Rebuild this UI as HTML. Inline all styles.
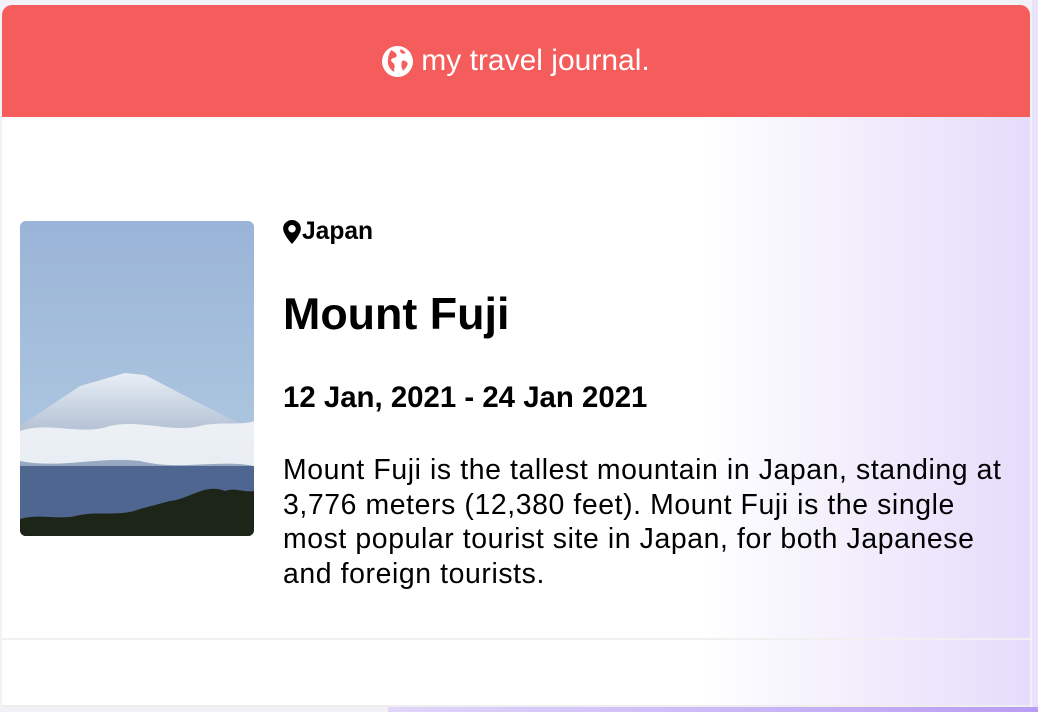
<!DOCTYPE html>
<html><head><style>
html,body{margin:0;padding:0;width:1038px;height:712px;overflow:hidden;font-family:"Liberation Sans",Arial,sans-serif;background:#f3f1f8}
.page{position:absolute;left:2px;top:5px;width:1028px;height:700px;background:linear-gradient(90deg,#fff 0,#fff 68%,#f3effc 82%,#e6dcfb 100%);border-top-left-radius:10px;border-top-right-radius:10px;overflow:hidden}
.rstrip{position:absolute;left:1032px;top:0;width:6px;height:712px;background:#e9e2fb}
.hdr{height:112px;background:#f55c5c;color:#fff;display:flex;align-items:center;justify-content:center;font-size:30px}
.hdr svg{margin-right:8px}
.img{position:absolute;left:18px;top:216px;width:234px;height:315px;border-radius:6px;overflow:hidden}
.txt{position:absolute;left:281px;top:212px;width:735px}
.loc{font-weight:bold;font-size:24.6px;display:flex;align-items:center;height:30px}
.loc svg{margin-right:1px}
h1{margin:43px 0 0;font-size:44.8px;line-height:48px}
.date{font-weight:bold;font-size:29.4px;margin-top:44px;line-height:32px}
p{font-size:28.4px;letter-spacing:0.6px;line-height:34.5px;margin:39px 0 0}
.l1{position:absolute;left:0;top:633px;width:1028px;height:2px;background:#f0f0f0}
.l2{position:absolute;left:2px;top:705px;width:1028px;height:2px;background:#eee}
.bot{position:absolute;left:388px;top:707px;width:650px;height:5px;background:linear-gradient(90deg,#e0d6fa,#b99cf4)}
</style></head><body>
<div class="rstrip"></div>
<div class="page">
<div class="hdr"><svg width="31" height="31" viewBox="0 0 30 30"><circle cx="15" cy="15" r="15" fill="#fff"/><path d="M9 4c3 2 6 3 5 6-1 2-4 1-5 3s2 3 3 5-1 4 0 7c-3-1-5-4-6-7-1-4 0-10 3-14z M18 3c2 1 4 2 5 4-2 0-3 1-4 0s-2-2-1-4z M20 14c2 0 4 1 5 3-1 3-3 6-5 7 0-3-2-4-1-6 0-2 0-3 1-4z" fill="#f55c5c"/></svg>my travel journal.</div>
<div class="l1"></div>
<div class="img"><svg width="234" height="315" viewBox="0 0 234 315">
<defs><linearGradient id="sky" x1="0" y1="0" x2="0" y2="1"><stop offset="0" stop-color="#9ab4d8"/><stop offset="1" stop-color="#b5cde2"/></linearGradient>
<linearGradient id="m" x1="0" y1="0" x2="0" y2="1"><stop offset="0" stop-color="#e8eef5"/><stop offset=".5" stop-color="#9fb0c8"/><stop offset="1" stop-color="#5a6f92"/></linearGradient></defs>
<rect width="234" height="315" fill="url(#sky)"/>
<path d="M0 205 L60 165 L105 152 L125 154 L175 180 L234 210 L234 315 L0 315Z" fill="url(#m)"/>
<path d="M0 210 C30 200 60 215 90 205 C120 198 150 212 180 205 C200 200 220 205 234 200 L234 245 C200 238 160 250 120 240 C80 235 40 248 0 240Z" fill="#f2f5f8" opacity=".9"/>
<rect y="245" width="234" height="70" fill="#4f6690"/>
<path d="M0 315 L0 298 C20 292 40 300 60 294 C80 290 100 296 120 288 L150 280 C170 278 185 262 205 270 C215 266 225 272 234 270 L234 315Z" fill="#1d2418"/>
</svg></div>
<div class="txt">
<div class="loc"><svg width="18" height="24" viewBox="0 0 17 23"><path d="M8.5 0C3.8 0 0 3.7 0 8.3 0 14 8.5 23 8.5 23S17 14 17 8.3C17 3.7 13.2 0 8.5 0zm0 12a3.6 3.6 0 1 1 0-7.2 3.6 3.6 0 0 1 0 7.2z" fill="#000"/></svg>Japan</div>
<h1>Mount Fuji</h1>
<div class="date">12 Jan, 2021 - 24 Jan 2021</div>
<p>Mount Fuji is the tallest mountain in Japan, standing at 3,776 meters (12,380 feet). Mount Fuji is the single most popular tourist site in Japan, for both Japanese and foreign tourists.</p>
</div>
</div>
<div class="l2"></div>
<div class="bot"></div>
</body></html>
